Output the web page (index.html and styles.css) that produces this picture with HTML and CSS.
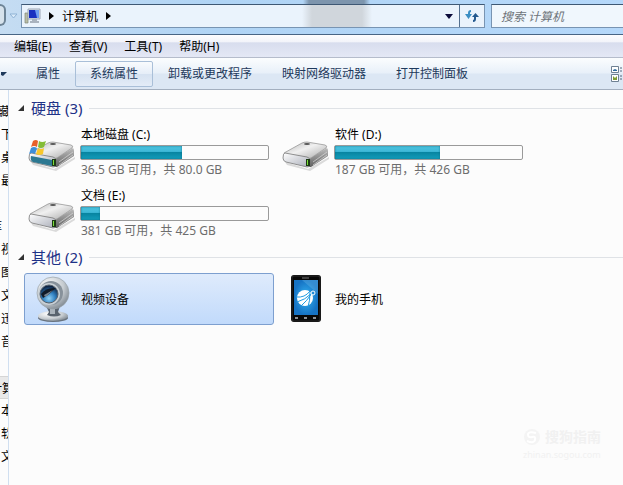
FILE: index.html
```html
<!DOCTYPE html>
<html lang="zh-CN">
<head>
    <meta charset="UTF-8">
    <meta name="viewport" content="width=device-width, initial-scale=1.0">
    <title>计算机</title>
    <link rel="stylesheet" href="styles.css">
</head>
<body>
    <!-- Shared drive picture -->
    <svg class="defs" aria-hidden="true">
        <defs>
            <linearGradient id="driveTop" x1="0" y1="0" x2="1" y2="1">
                <stop offset="0" stop-color="#b4b4b4"/>
                <stop offset=".45" stop-color="#f0f0f0"/>
                <stop offset="1" stop-color="#a9a9a9"/>
            </linearGradient>
            <linearGradient id="driveSide" x1="0" y1="0" x2="0" y2="1">
                <stop offset="0" stop-color="#bdbdbd"/>
                <stop offset="1" stop-color="#5f5f5f"/>
            </linearGradient>
            <linearGradient id="driveFront" x1="0" y1="0" x2="1" y2="1">
                <stop offset="0" stop-color="#ffffff"/>
                <stop offset="1" stop-color="#a9adb8"/>
            </linearGradient>
            <symbol id="drive" viewBox="0 0 48 34">
                <path d="M3 22 L26 29 L47 17 L47 19 L28 31 L5 25Z" fill="#dadada"/>
                <path d="M27 19 L45 8 Q46 9 46 11 L46 16 L29 27 L26 27Z" fill="url(#driveSide)"/>
                <path d="M2 13 L20 3 Q22 2 25 2 L43 5 Q46 6 44 8 L29 18 Q27 19 24 18 L3 15Z" fill="url(#driveTop)" stroke="#8c8c8c" stroke-width=".7"/>
                <path d="M3 13 L25 17 Q28 18 28 20 L28 25 Q28 27 25 27 L4 22 Q1 21 1 18 Q1 13 3 13Z" fill="url(#driveFront)" stroke="#777" stroke-width=".8"/>
                <ellipse cx="25" cy="4" rx="3" ry="1" fill="#555"/>
                <path d="M24 19h4v7h-4z" fill="#1d3a14"/>
                <path d="M25 20h1v5h-1z" fill="#7be03a"/>
                <path d="M31 25 L45 15 M31 22 L45 12" stroke="#d8d8d8" stroke-width=".7"/>
            </symbol>
        </defs>
    </svg>

    <div class="window">
        <header class="address-row">
            <button class="back" aria-label="返回"></button>
            <button class="history" aria-label="最近页面">
                <svg width="9" height="6" viewBox="0 0 9 6"><path d="M1 1h7L4.500 5z" fill="#dcecfa" stroke="#8fb2d4"/></svg>
            </button>
            <div class="address">
                <svg class="pc" width="18" height="16" viewBox="0 0 18 16">
                    <path d="M1 5h3v10H1z" fill="#b9bda5" stroke="#83877a" stroke-width=".7"/>
                    <path d="M4 1h12v10H4z" fill="#dfe4ea" stroke="#9aa5b5"/>
                    <path d="M5 2h10v8H5z" fill="#1a2fc0"/>
                    <path d="M11 2h4v8h-2z" fill="#6f9df0"/>
                    <path d="M8 11h5v2h2v2H6v-2h2z" fill="#a9b3bf"/>
                </svg>
                <svg width="5" height="8" viewBox="0 0 5 8"><path d="M0 0l5 4-5 4z" fill="#000"/></svg>
                <button class="crumb">计算机</button>
                <svg width="5" height="8" viewBox="0 0 5 8"><path d="M0 0l5 4-5 4z" fill="#000"/></svg>
                <button class="drop" aria-label="以前的位置">
                    <svg width="8" height="5" viewBox="0 0 8 5"><path d="M0 0h8L4 5z" fill="#0a0a3a"/></svg>
                </button>
                <button class="refresh" aria-label="刷新">
                    <svg width="16" height="14" viewBox="0 0 16 14">
                        <path d="M7 1Q4 1 4 4V5H1L4.500 10 8 5H6V4Q6 3 7 3z" fill="#3c8fc4"/>
                        <path d="M9 13Q12 13 12 10V8H15L11.500 4 8 8H10V10Q10 11 9 11z" fill="#23598f"/>
                    </svg>
                </button>
            </div>
            <input class="search" type="search" placeholder="搜索 计算机" aria-label="搜索 计算机">
        </header>

        <nav class="menu">
            <button>编辑(E)</button>
            <button>查看(V)</button>
            <button>工具(T)</button>
            <button>帮助(H)</button>
        </nav>

        <div class="toolbar">
            <button class="organize" aria-label="组织">
                <svg width="6" height="4" viewBox="0 0 6 4"><path d="M0 0h6L2 4 0 3z" fill="#1e395b"/></svg>
            </button>
            <button>属性</button>
            <button class="active">系统属性</button>
            <button>卸载或更改程序</button>
            <button>映射网络驱动器</button>
            <button>打开控制面板</button>
            <button class="view" aria-label="更改视图">
                <svg width="11" height="16" viewBox="0 0 11 16">
                    <path d="M.5 .5h7v6h-7zM.5 8.500h7v7h-7z" fill="#fff" stroke="#6f8193"/>
                    <path d="M2 4l2-1 2 1v1H2z" fill="#2c6a9c"/>
                    <path d="M2 10l2 2 2-2v4H2z" fill="#7f9d35"/>
                    <path d="M9 2h2M9 5h2M9 10h2M9 13h2" stroke="#51677d"/>
                </svg>
            </button>
        </div>

        <div class="main">
            <aside class="sidebar">
                <ul class="tree">
                    <li class="root wide">收藏夹</li>
                    <li>下载</li>
                    <li>桌面</li>
                    <li>最近访问的位置</li>
                </ul>
                <ul class="tree">
                    <li class="root">库</li>
                    <li>视频</li>
                    <li>图片</li>
                    <li>文档</li>
                    <li>迅雷下载</li>
                    <li>音乐</li>
                </ul>
                <ul class="tree">
                    <li class="root selected">计算机</li>
                    <li>本地磁盘 (C:)</li>
                    <li>软件 (D:)</li>
                    <li>文档 (E:)</li>
                </ul>
            </aside>

            <main class="content">
                <section>
                    <h2>
                        <svg width="6" height="6" viewBox="0 0 6 6"><path d="M6 0v6H0z" fill="#333"/></svg>
                        硬盘 (3)
                    </h2>
                    <div class="items">
                        <div class="drive">
                            <div class="picture">
                                <svg width="48" height="34"><use href="#drive"/></svg>
                                <svg class="flag" width="48" height="34" viewBox="0 0 48 34">
                                    <path d="M3 16 L24 20 V26 L5 22 Q2 21 3 16Z" fill="#2c7891"/>
                                    <path d="M5 1Q8 -1 10 1L9 7Q6 5 3 7z" fill="#e8602a"/>
                                    <path d="M11 1Q14 3 18 1L16 7Q13 9 10 7z" fill="#84bd35"/>
                                    <path d="M3 8Q6 6 9 8L7 14Q4 12 1 14z" fill="#3d8ed8"/>
                                    <path d="M10 8Q13 10 16 8L15 14Q11 16 8 14z" fill="#f8c72c"/>
                                </svg>
                            </div>
                            <div class="info">
                                <p>本地磁盘 (C:)</p>
                                <div class="bar"><div class="used" style="width: 54%"></div></div>
                                <p class="free">36.5 GB 可用，共 80.0 GB</p>
                            </div>
                        </div>
                        <div class="drive">
                            <div class="picture"><svg width="48" height="34"><use href="#drive"/></svg></div>
                            <div class="info">
                                <p>软件 (D:)</p>
                                <div class="bar"><div class="used" style="width: 56%"></div></div>
                                <p class="free">187 GB 可用，共 426 GB</p>
                            </div>
                        </div>
                        <div class="drive">
                            <div class="picture"><svg width="48" height="34"><use href="#drive"/></svg></div>
                            <div class="info">
                                <p>文档 (E:)</p>
                                <div class="bar"><div class="used" style="width: 10%"></div></div>
                                <p class="free">381 GB 可用，共 425 GB</p>
                            </div>
                        </div>
                    </div>
                </section>

                <section>
                    <h2>
                        <svg width="6" height="6" viewBox="0 0 6 6"><path d="M6 0v6H0z" fill="#333"/></svg>
                        其他 (2)
                    </h2>
                    <div class="items">
                        <div class="device picked">
                            <svg width="48" height="48" viewBox="0 0 48 48">
                                <defs>
                                    <radialGradient id="shell" cx=".35" cy=".3" r=".8">
                                        <stop offset="0" stop-color="#fff"/>
                                        <stop offset=".6" stop-color="#c5cbd0"/>
                                        <stop offset="1" stop-color="#747e87"/>
                                    </radialGradient>
                                    <radialGradient id="lens" cx=".5" cy=".75" r=".7">
                                        <stop offset="0" stop-color="#8fd0f5"/>
                                        <stop offset=".5" stop-color="#2f7fc0"/>
                                        <stop offset="1" stop-color="#0d1f3c"/>
                                    </radialGradient>
                                </defs>
                                <ellipse cx="25" cy="43" rx="15" ry="4" fill="#68727d"/>
                                <ellipse cx="25" cy="41" rx="15" ry="5" fill="url(#shell)"/>
                                <path d="M18 31h14l-2 6 3 3q-7 3-14 0l2-3z" fill="#59636e"/>
                                <path d="M22 34h5v5h-5z" fill="#aab3bb"/>
                                <circle cx="25" cy="18" r="16" fill="url(#shell)" stroke="#9aa3aa" stroke-width=".7"/>
                                <circle cx="23" cy="18" r="12" fill="#87919a"/>
                                <circle cx="21" cy="19" r="11" fill="#c9d0d5"/>
                                <circle cx="21" cy="19" r="9" fill="url(#lens)" stroke="#53606d"/>
                                <path d="M13 19q5-7 15-6l-8 7-5 3z" fill="#101a28"/>
                                <path d="M16 20l9-5-5 5-3 2z" fill="#75818e"/>
                            </svg>
                            <span>视频设备</span>
                        </div>
                        <div class="device">
                            <svg width="48" height="48" viewBox="0 0 48 48">
                                <defs>
                                    <radialGradient id="screen">
                                        <stop offset="0" stop-color="#35b5f4"/>
                                        <stop offset="1" stop-color="#1673c4"/>
                                    </radialGradient>
                                </defs>
                                <rect x="9" y="0" width="30" height="47" rx="3" fill="#080808"/>
                                <rect x="10" y="1" width="28" height="45" rx="2" fill="none" stroke="#444" stroke-width=".6"/>
                                <path d="M12 5h24v35H12z" fill="url(#screen)"/>
                                <path d="M20 3h7" stroke="#777"/>
                                <path d="M20 5h16v14z" fill="#7fc6ee" opacity=".3"/>
                                <circle cx="23" cy="23" r="8" fill="#fff"/>
                                <path d="M14 22q9 1 14-6M15 27q8-2 15-9M19 31q6-5 11-13M26 32q2-6 2-15" fill="none" stroke="#209be2"/>
                                <circle cx="31" cy="18" r="2" fill="none" stroke="#fff"/>
                                <path d="M13 43h3M22 43h3M31 43h3" stroke="#b9c0c5" stroke-width="1.500"/>
                            </svg>
                            <span>我的手机</span>
                        </div>
                    </div>
                </section>

                <div class="watermark">
                    <svg width="18" height="18" viewBox="0 0 18 18">
                        <circle cx="9" cy="9" r="8" fill="#f4f4f4"/>
                        <path d="M13 5Q5 3 5 6.500T9 9T12 12T4 13" fill="none" stroke="#fff" stroke-width="2"/>
                    </svg>
                    <b>搜狗指南</b>
                    <small>zhinan.sogou.com</small>
                </div>
            </main>
        </div>
    </div>
</body>
</html>
```
FILE: styles.css
```css
* {
    box-sizing: border-box;
}
body {
    margin: 0;
    font-family: "Noto Sans", "Noto Sans CJK SC", sans-serif;
    font-size: 12px;
    line-height: 17px;
    color: #000;
}
button {
    font: inherit;
    color: inherit;
    background: none;
    border: none;
    padding: 0;
    white-space: nowrap;
}
svg {
    display: block;
    flex: none;
}
h2, p, ul {
    margin: 0;
    padding: 0;
}
.defs {
    position: absolute;
    width: 0;
    height: 0;
}
.window {
    display: flex;
    flex-direction: column;
    min-height: 100vh;
    overflow: hidden;
}

/* Address bar */
.address-row {
    display: flex;
    align-items: flex-start;
    height: 35px;
    padding-top: 4px;
    background: linear-gradient(90deg, transparent 303px, #7d95ad 309px, #7d95ad 364px, transparent 370px) top / 100% 4px no-repeat, linear-gradient(90deg, #c5dcf2, #b0d4f5 35%, #b5d8fa);
    border-bottom: 1px solid #486585;
}
.back {
    width: 6px;
    height: 22px;
    background: #d6e2ec;
    border: 2px solid #6d8396;
    border-left: none;
    border-radius: 0 10px 10px 0;
}
.history {
    width: 15px;
    height: 24px;
    display: flex;
    align-items: center;
    justify-content: center;
}
.address {
    flex: 1;
    display: flex;
    align-items: center;
    gap: 8px;
    height: 24px;
    padding-left: 2px;
    background: linear-gradient(90deg, transparent 280px, #d0d6dc 290px, #d0d6dc 340px, transparent 350px), #eaf3fc;
    border: 1px solid #7894b2;
    border-top-color: #3e5874;
}
.address .pc {
    margin-right: -1px;
}
.drop {
    margin-left: auto;
}
.refresh {
    display: flex;
    align-items: center;
    justify-content: center;
    width: 25px;
    height: 22px;
    margin-left: -2px;
    border-left: 1px solid #54708f;
}
.search {
    width: 138px;
    height: 24px;
    margin: 0 -6px 0 6px;
    padding: 0 9px;
    font: inherit;
    background: #f0f7fd;
    border: 1px solid #7894b2;
    border-top-color: #3e5874;
    border-radius: 0;
    outline: none;
}
.search::placeholder {
    color: #6e747a;
    font-style: italic;
    opacity: 1;
}

/* Menu and command bar */
.menu {
    display: flex;
    gap: 17px;
    height: 23px;
    padding-left: 14px;
    background: linear-gradient(#fdfdfe, #f3f4fa 30%, #d8ddee 36%, #e4e8f5);
    border-bottom: 1px solid #b5bccb;
}
.toolbar {
    display: flex;
    align-items: center;
    height: 32px;
    color: #1e395b;
    background: linear-gradient(#fbfdfe, #e8f0f9 48%, #dce7f4 52%, #dce7f4);
    border-bottom: 1px solid #a3afbf;
}
.toolbar button {
    height: 26px;
    padding: 0 14px;
    border: 1px solid transparent;
    border-radius: 2px;
}
.toolbar .organize {
    width: 21px;
    padding: 0;
}
.toolbar .active {
    background: linear-gradient(#f9fbfd, #e6eef8 48%, #d6e2f1 52%, #e3ecf7);
    border-color: #a9bfd8;
}
.toolbar .view {
    margin-left: auto;
    padding: 0;
}

/* Navigation pane */
.main {
    flex: 1;
    display: flex;
    background: #fcfcfc;
}
.sidebar {
    display: flex;
    flex-direction: column;
    gap: 23px;
    width: 9px;
    padding-top: 10px;
    overflow: hidden;
    border-right: 1px solid #d0dff0;
}
.tree {
    list-style: none;
}
.tree li {
    height: 23px;
    padding-left: 1px;
    line-height: 23px;
    white-space: nowrap;
}
.tree .root {
    text-indent: -11px;
}
.tree .wide {
    text-indent: -14px;
}
.tree .selected {
    background: #e9e9e9;
    border: solid #d5d5d5;
    border-width: 1px 0;
}

/* File list */
.content {
    flex: 1;
    position: relative;
    padding: 7px 0 0 9px;
}
h2 {
    display: flex;
    align-items: center;
    gap: 7px;
    height: 22px;
    font-size: 15px;
    font-weight: normal;
    color: #1e3287;
}
h2::after {
    content: "";
    flex: 1;
    height: 1px;
    background: #dfe2e6;
}
.items {
    display: grid;
    grid-template-columns: repeat(auto-fill, 250px);
    gap: 0 4px;
    padding-left: 6px;
}
.drive {
    display: flex;
    gap: 4px;
    height: 61px;
    padding: 7px 5px 0 4px;
}
.picture {
    position: relative;
    padding-top: 14px;
}
.flag {
    position: absolute;
    top: 14px;
    left: 0;
}
.info {
    flex: 1;
}
.info p {
    padding-left: 1px;
}
.bar {
    height: 15px;
    margin: 2px 0 1px;
    background: #fcfcfc;
    border: 1px solid #9a9a9a;
    border-radius: 2px;
}
.used {
    height: 100%;
    background: linear-gradient(#4cc2de, #3fb9d8 42%, #07839f 46%, #139dbb);
    box-shadow: inset 0 0 2px #0a6f88;
}
.free {
    color: #6d6d6d;
}
section + section h2 {
    margin-top: 5px;
}
.device {
    display: flex;
    align-items: center;
    gap: 5px;
    height: 52px;
    margin-top: 5px;
    padding-left: 3px;
    border: 1px solid transparent;
    border-radius: 3px;
}
.picked {
    background: linear-gradient(#dfebfc, #c1dafb);
    border-color: #7d9fcf;
}

.watermark {
    position: absolute;
    right: 22px;
    bottom: 22px;
    display: grid;
    grid-template-columns: 18px auto;
    column-gap: 4px;
    color: #f1f1f1;
}
.watermark b {
    font-size: 14px;
}
.watermark small {
    grid-column: 1 / 3;
    font-size: 9px;
}
```
